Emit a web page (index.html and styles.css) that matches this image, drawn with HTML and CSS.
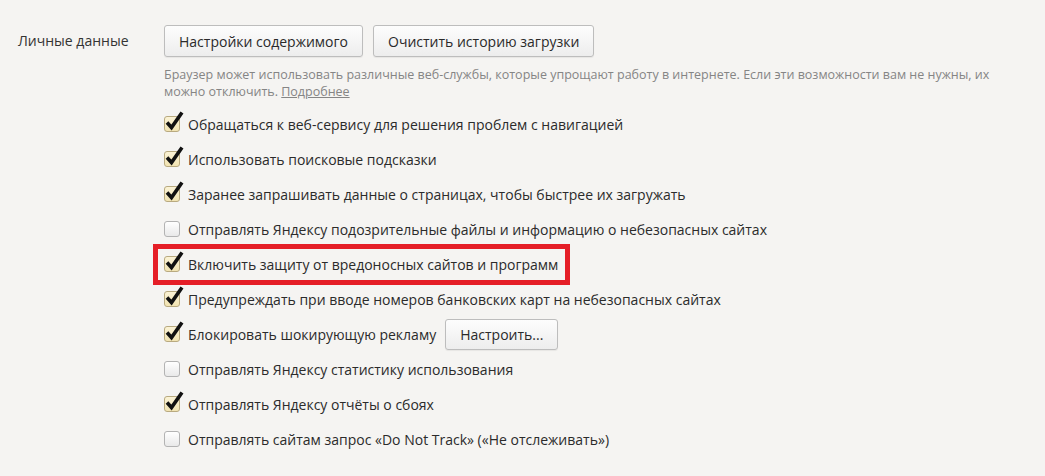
FILE: index.html
```html
<!DOCTYPE html>
<html lang="ru">
<head>
<meta charset="utf-8">
<title>Личные данные</title>
<link rel="stylesheet" href="styles.css">
</head>
<body>
<section class="section">
  <div class="section-label">Личные данные</div>
  <div class="section-body">
    <div class="buttons">
      <button class="btn btn-wide">Настройки содержимого</button>
      <button class="btn btn-wide">Очистить историю загрузки</button>
    </div>
    <p class="desc">Браузер может использовать различные веб-службы, которые упрощают работу в интернете. Если эти возможности вам не нужны, их можно отключить. <a class="more" href="#">Подробнее</a></p>
    <ul class="options">
      <li class="option"><span class="cb on"><svg class="tick" viewBox="0 0 20 22"><polyline points="3,13.5 7.5,18.5 18,3.5"/></svg></span><span class="text">Обращаться к веб-сервису для решения проблем с навигацией</span></li>
      <li class="option"><span class="cb on"><svg class="tick" viewBox="0 0 20 22"><polyline points="3,13.5 7.5,18.5 18,3.5"/></svg></span><span class="text">Использовать поисковые подсказки</span></li>
      <li class="option"><span class="cb on"><svg class="tick" viewBox="0 0 20 22"><polyline points="3,13.5 7.5,18.5 18,3.5"/></svg></span><span class="text">Заранее запрашивать данные о страницах, чтобы быстрее их загружать</span></li>
      <li class="option"><span class="cb"></span><span class="text">Отправлять Яндексу подозрительные файлы и информацию о небезопасных сайтах</span></li>
      <li class="option highlighted"><span class="cb on"><svg class="tick" viewBox="0 0 20 22"><polyline points="3,13.5 7.5,18.5 18,3.5"/></svg></span><span class="text">Включить защиту от вредоносных сайтов и программ</span></li>
      <li class="option"><span class="cb on"><svg class="tick" viewBox="0 0 20 22"><polyline points="3,13.5 7.5,18.5 18,3.5"/></svg></span><span class="text">Предупреждать при вводе номеров банковских карт на небезопасных сайтах</span></li>
      <li class="option"><span class="cb on"><svg class="tick" viewBox="0 0 20 22"><polyline points="3,13.5 7.5,18.5 18,3.5"/></svg></span><span class="text">Блокировать шокирующую рекламу</span><button class="btn btn-small">Настроить...</button></li>
      <li class="option"><span class="cb"></span><span class="text">Отправлять Яндексу статистику использования</span></li>
      <li class="option"><span class="cb on"><svg class="tick" viewBox="0 0 20 22"><polyline points="3,13.5 7.5,18.5 18,3.5"/></svg></span><span class="text">Отправлять Яндексу отчёты о сбоях</span></li>
      <li class="option"><span class="cb"></span><span class="text">Отправлять сайтам запрос «Do Not Track» («Не отслеживать»)</span></li>
    </ul>
  </div>
</section>
</body>
</html>
```
FILE: styles.css
```css
html, body {
  margin: 0;
  padding: 0;
  background: #f5f4f2;
}
body {
  font-family: "Open Sans", "Noto Sans", sans-serif;
  color: #2b2b2b;
  font-size: 14px;
}
.section {
  display: flex;
  padding: 25px 0 0 18px;
}
.section-label {
  width: 146px;
  flex: none;
  font-size: 14px;
  line-height: 32px;
  color: #333;
}
.section-body {
  flex: 1;
}
.buttons {
  display: flex;
  gap: 10px;
}
.btn {
  font-family: inherit;
  font-size: 14px;
  color: #2a2a2a;
  background: linear-gradient(#fdfdfd, #ededed);
  border: 1px solid #bdbdbd;
  border-radius: 3px;
  box-shadow: 0 1px 1px rgba(0,0,0,0.06);
  padding: 0;
  cursor: pointer;
}
.btn-wide {
  height: 32px;
  padding: 0 14px;
}
.desc {
  margin: 9px 0 0;
  width: 830px;
  font-size: 12.5px;
  line-height: 17px;
  color: #858585;
}
.more {
  color: #858585;
  text-decoration: underline;
}
.options {
  list-style: none;
  margin: 7px 0 0;
  padding: 0;
}
.option {
  position: relative;
  display: flex;
  align-items: center;
  height: 35px;
}
.cb {
  position: relative;
  flex: none;
  width: 14px;
  height: 14px;
  margin-right: 8px;
  margin-top: -2px;
  border: 1px solid #b3b3b3;
  border-radius: 3px;
  background: linear-gradient(#ffffff, #e9e9e9);
}
.cb.on {
  border-color: #b9aa80;
  background: linear-gradient(#fbf3d6, #f1e3b2);
}
.tick {
  position: absolute;
  left: -1px;
  top: -8px;
  width: 20px;
  height: 22px;
  overflow: visible;
}
.tick polyline {
  fill: none;
  stroke: #111;
  stroke-width: 3.6;
  stroke-linejoin: miter;
}
.text {
  white-space: nowrap;
}
.btn-small {
  height: 31px;
  margin-left: 9px;
  padding: 0 14px;
}
.highlighted::after {
  content: "";
  position: absolute;
  left: -11px;
  top: -3px;
  width: 417px;
  height: 41px;
  box-sizing: border-box;
  border: 5px solid #e51e27;
  pointer-events: none;
}
```
